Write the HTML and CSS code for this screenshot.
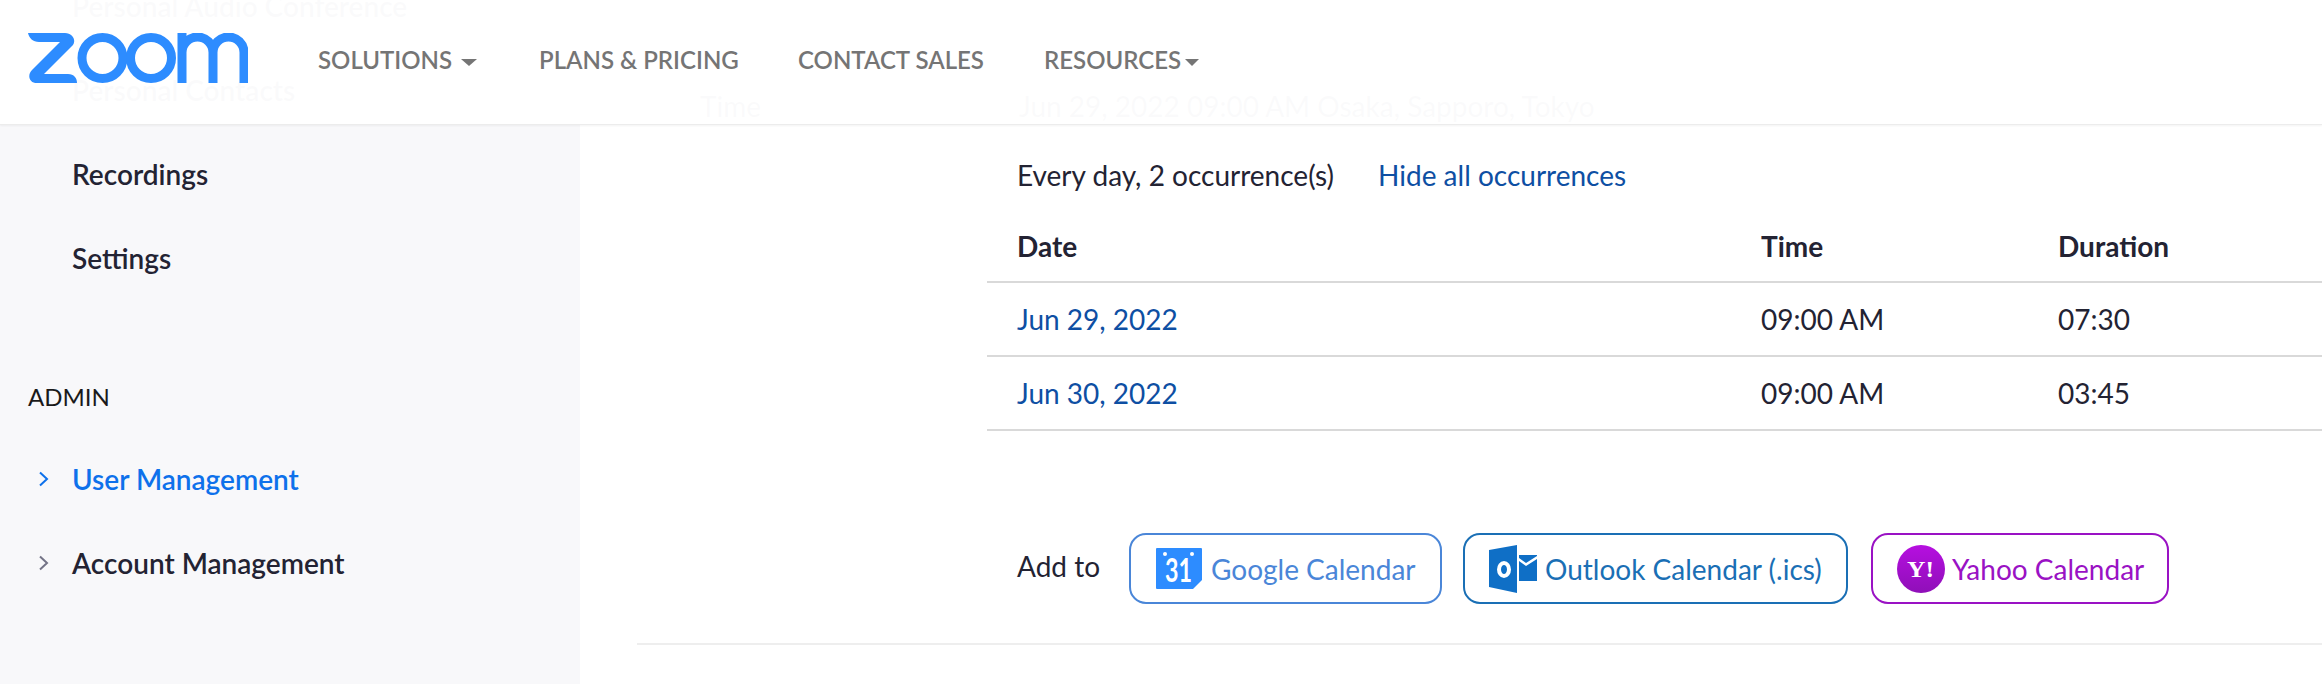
FILE: index.html
```html
<!DOCTYPE html>
<html lang="en">
<head>
<meta charset="utf-8">
<title>Zoom meeting</title>
<link rel="stylesheet" href="styles.css">
</head>
<body>
<div class="page">
  <header class="topbar">
    <svg class="logo" width="220" height="50" viewBox="0 0 220 50" aria-label="Zoom">
      <path class="logo-fill" d="M0 0H37C45 0 49 8 44 13L16 41H40C46 41 49 45 49 50H9C1 50-1 42 4 37L32 9H11C5 9 1 5 0 0Z"/>
      <circle class="logo-ring" cx="74.5" cy="25" r="20.5"/>
      <circle class="logo-ring" cx="123" cy="25" r="20.5"/>
      <path class="logo-ring" d="M154 50V0M154 19.5A15.5 15.5 0 0 1 185 19.5V50M185 19.5A15.5 15.5 0 0 1 216 19.5V50"/>
    </svg>
    <nav class="topnav">
      <a class="topnav-link topnav-solutions">SOLUTIONS <span class="caret caret-wide"></span></a>
      <a class="topnav-link topnav-plans">PLANS &amp; PRICING</a>
      <a class="topnav-link topnav-contact">CONTACT SALES</a>
      <a class="topnav-link topnav-resources">RESOURCES<span class="caret"></span></a>
    </nav>
  </header>

  <aside class="sidebar">
    <ul class="side-list side-list-scrolled">
      <li class="side-item">Personal Audio Conference</li>
      <li class="side-item">Personal Contacts</li>
      <li class="side-item">Recordings</li>
      <li class="side-item">Settings</li>
    </ul>
    <div class="side-heading">ADMIN</div>
    <ul class="side-list">
      <li class="side-item side-item-active">
        <svg class="chevron" width="12" height="16" viewBox="0 0 12 16"><path d="M2 1.5 9 8 2 14.5"/></svg>User Management
      </li>
      <li class="side-item">
        <svg class="chevron" width="12" height="16" viewBox="0 0 12 16"><path d="M2 1.5 9 8 2 14.5"/></svg>Account Management
      </li>
    </ul>
  </aside>

  <main class="content">
    <div class="time-row">
      <span class="time-label">Time</span>
      <span>Jun 29, 2022 09:00 AM Osaka, Sapporo, Tokyo</span>
    </div>
    <div class="recurrence">
      <span>Every day, 2 occurrence(s)</span>
      <a class="link">Hide all occurrences</a>
    </div>
    <div class="occ-table">
      <div class="occ-row occ-head"><span>Date</span><span>Time</span><span>Duration</span></div>
      <div class="occ-row"><a class="link">Jun 29, 2022</a><span>09:00 AM</span><span>07:30</span></div>
      <div class="occ-row"><a class="link">Jun 30, 2022</a><span>09:00 AM</span><span>03:45</span></div>
    </div>
    <div class="add-to">
      <span class="add-label">Add to</span>
      <a class="cal-btn cal-google">
        <svg width="46" height="41" viewBox="0 0 46 41">
          <path fill="#2d8cff" d="M1 0H45A1 1 0 0 1 46 1V32L37 41H1A1 1 0 0 1 0 40V1A1 1 0 0 1 1 0Z"/>
          <circle cx="9" cy="6" r="2" fill="#fff"/><circle cx="36" cy="6" r="2" fill="#fff"/>
          <text class="icon-31" x="9" y="34" textLength="27" lengthAdjust="spacingAndGlyphs">31</text>
        </svg>
        Google Calendar
      </a>
      <a class="cal-btn cal-outlook">
        <svg width="48" height="48" viewBox="0 0 48 48">
          <path fill="#0f6fc6" d="M0 5 28 0V48L0 42Z"/>
          <ellipse cx="15" cy="24.500" rx="5" ry="6.500" fill="none" stroke="#fff" stroke-width="4"/>
          <path fill="#0f6fc6" d="M30 10H48V11L37 18 30 13ZM30 16 37 21 48 14V36H30Z"/>
        </svg>
        Outlook Calendar (.ics)
      </a>
      <a class="cal-btn cal-yahoo">
        <svg width="48" height="48" viewBox="0 0 48 48">
          <defs><linearGradient id="yh" x1="0" y1="0" x2="0" y2="1"><stop offset="0" stop-color="#b60fe0"/><stop offset="1" stop-color="#8f0fb8"/></linearGradient></defs>
          <circle cx="24" cy="24" r="24" fill="url(#yh)"/>
          <text class="icon-y" x="10" y="32" textLength="27" lengthAdjust="spacingAndGlyphs">Y!</text>
        </svg>
        Yahoo Calendar
      </a>
    </div>
    <div class="rule"></div>
  </main>
</div>
</body>
</html>
```
FILE: styles.css
```css
* { box-sizing: border-box; }
html, body { margin: 0; height: 100%; }
body {
  font-family: Lato, "Open Sans", sans-serif;
  color: #232333;
  background: #fff;
  overflow: hidden;
}
a { text-decoration: none; }
ul { list-style: none; margin: 0; padding: 0; }

.page { position: relative; display: flex; width: 2322px; height: 684px; overflow: hidden; }

/* translucent fixed bar over the scrolled page */
.topbar {
  position: absolute;
  top: 0; left: 0; right: 0;
  height: 125px;
  display: flex;
  align-items: center;
  padding: 0 0 0 28px;
  background: rgba(255, 255, 255, 0.98);
  border-bottom: 1px solid #ececec;
  box-shadow: 0 1px 2px rgba(0, 0, 0, 0.05);
  z-index: 5;
}
.logo { flex: none; margin-top: -8px; display: block; }
.logo-fill { fill: #2d8cff; }
.logo-ring { fill: none; stroke: #2d8cff; stroke-width: 9; }
.topnav { display: flex; align-items: center; margin-left: 70px; margin-top: -5px; }
.topnav-link { color: #757575; font-size: 24px; font-weight: 600; white-space: nowrap; }
.topnav-solutions { width: 221px; }
.topnav-plans { width: 259px; }
.topnav-contact { width: 246px; }
.caret {
  display: inline-block;
  width: 0; height: 0;
  margin-left: 4px;
  vertical-align: 3px;
  border-left: 7px solid transparent;
  border-right: 7px solid transparent;
  border-top: 7px solid #757575;
}
.caret-wide { margin-left: 3px; border-left-width: 8px; border-right-width: 8px; }

.sidebar { flex: none; width: 580px; height: 684px; background: #f8f8fa; }
.side-list-scrolled { margin-top: -36px; }
.side-item {
  height: 84px;
  display: flex;
  align-items: center;
  padding-left: 72px;
  position: relative;
  font-size: 28px;
  font-weight: 600;
  white-space: nowrap;
}
.side-item-active { color: #0e71eb; }
.chevron { position: absolute; left: 38px; top: 34px; fill: none; stroke: #747487; stroke-width: 2; }
.side-item-active .chevron { stroke: #0e71eb; }
.side-heading { margin-top: 55px; height: 82px; padding-left: 28px; display: flex; align-items: center; font-size: 24px; color: #1a1a1a; }

.content { flex: 1; min-width: 0; font-size: 28px; }
.time-row { display: flex; height: 34px; margin-top: 89px; padding-left: 120px; align-items: center; white-space: nowrap; }
.time-label { width: 319px; }
.recurrence { display: flex; gap: 44px; height: 34px; margin-top: 35px; padding-left: 437px; align-items: center; white-space: nowrap; }
.link { color: #0e4fa3; }
.occ-table { margin-top: 18px; margin-left: 407px; }
.occ-row {
  display: grid;
  grid-template-columns: 744px 297px 1fr;
  height: 74px;
  padding: 0 0 0 30px;
  align-items: center;
  border-bottom: 2px solid #d9d9d9;
}
.occ-head { height: 73px; font-weight: 700; }
.add-to { display: flex; align-items: center; height: 71px; margin-top: 102px; margin-left: 437px; }
.add-label { width: 112px; margin-top: -6px; }
.cal-btn {
  display: flex;
  align-items: center;
  height: 71px;
  border: 2px solid;
  border-radius: 17px;
  white-space: nowrap;
  font-size: 28px;
}
.cal-google { width: 313px; padding-left: 25px; gap: 9px; color: #4a86d8; border-color: #4a86d8; }
.cal-outlook { width: 385px; margin-left: 21px; padding-left: 24px; gap: 8px; color: #1a6fb5; border-color: #1a6fb5; }
.cal-yahoo { width: 298px; margin-left: 23px; padding-left: 24px; gap: 7px; color: #9a12c4; border-color: #9a12c4; }
.icon-31 { font-family: Lato, sans-serif; font-size: 32px; font-weight: 700; fill: #fff; }
.icon-y { font-family: "Liberation Serif", serif; font-size: 24px; font-weight: 700; fill: #fff; }
.rule { margin-top: 39px; margin-left: 57px; height: 2px; background: #eeeeee; }
```
